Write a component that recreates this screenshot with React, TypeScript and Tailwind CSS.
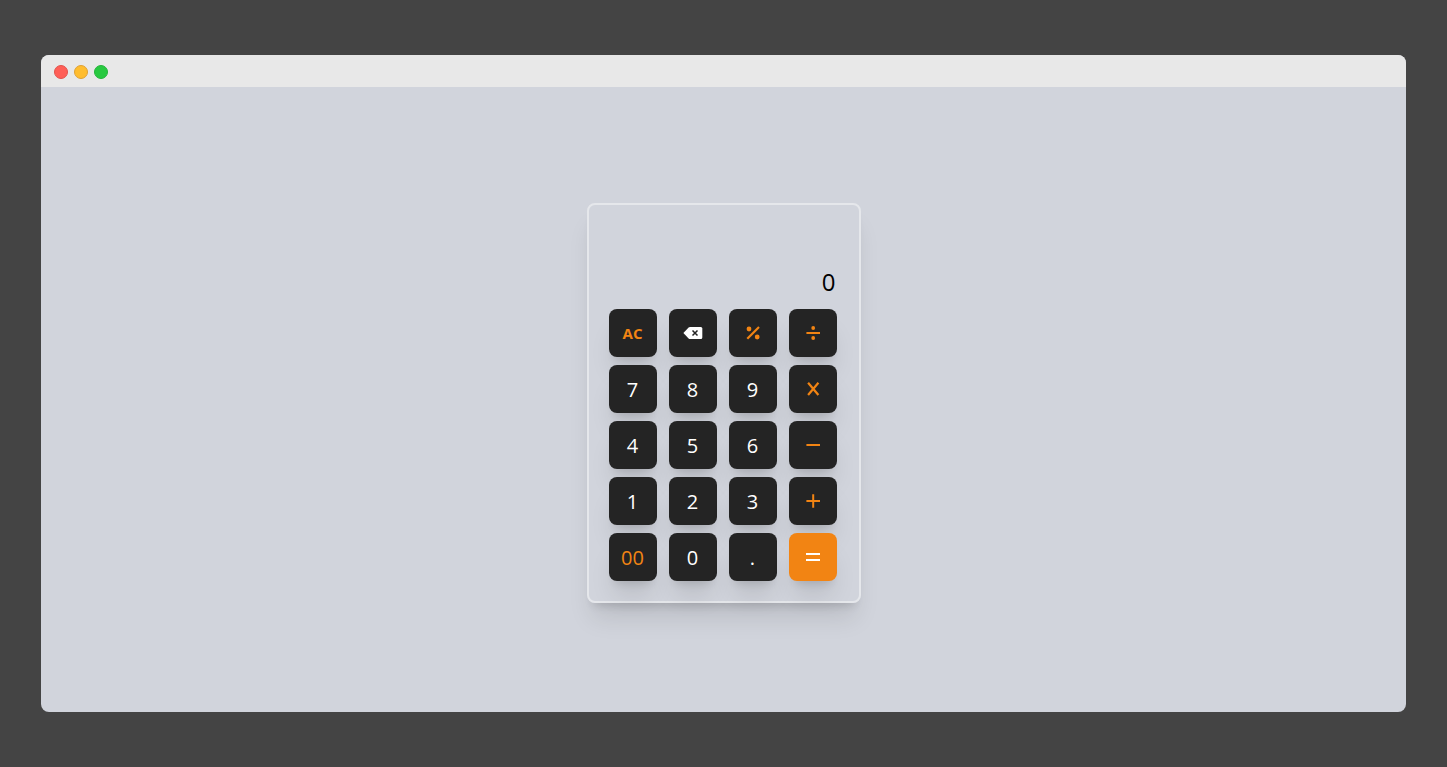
import { useState } from "react";
import type { ReactNode } from "react";

type Key = { value: string; label: string; face?: ReactNode; tone?: string };

const ORANGE = "bg-[#242424] text-[#f28413]";
const WHITE = "bg-[#242424] text-white";

function Glyph({ children }: { children: ReactNode }) {
  return (
    <svg viewBox="0 0 20 20" className="size-5" fill="none" stroke="currentColor" strokeWidth="2" aria-hidden="true">
      {children}
    </svg>
  );
}

const KEYS: Key[] = [
  { value: "AC", label: "All clear", tone: ORANGE, face: <span className="pt-0.5 text-[15px] font-bold">AC</span> },
  {
    value: "DEL",
    label: "Delete",
    face: (
      <Glyph>
        <path d="M.4 10 5.6 4.6Q6.2 4 7 4H17.8Q19.3 4 19.3 5.5V14.5Q19.3 16 17.8 16H7Q6.2 16 5.6 15.4L.4 10Z" fill="currentColor" stroke="none" />
        <path d="m9.5 7.5 5 5m0-5-5 5" stroke="#242424" strokeWidth="1.5" />
      </Glyph>
    ),
  },
  {
    value: "%",
    label: "Percent",
    tone: ORANGE,
    face: (
      <Glyph>
        <path d="M16 4 4.3 15.8" strokeWidth="2.2" />
        <circle cx="6" cy="6" r="2.4" fill="currentColor" stroke="none" />
        <circle cx="14.2" cy="14" r="2.4" fill="currentColor" stroke="none" />
      </Glyph>
    ),
  },
  {
    value: "/",
    label: "Divide",
    tone: ORANGE,
    face: (
      <Glyph>
        <path d="M3.4 10H17" />
        <circle cx="10.2" cy="5" r="1.9" fill="currentColor" stroke="none" />
        <circle cx="10.2" cy="15" r="1.9" fill="currentColor" stroke="none" />
      </Glyph>
    ),
  },
  { value: "7", label: "7" },
  { value: "8", label: "8" },
  { value: "9", label: "9" },
  { value: "*", label: "Multiply", tone: ORANGE, face: <Glyph><path d="M5.1 3.7 15.4 16M15.4 3.7 5.1 16" strokeWidth="2.2" /></Glyph> },
  { value: "4", label: "4" },
  { value: "5", label: "5" },
  { value: "6", label: "6" },
  { value: "-", label: "Subtract", tone: ORANGE, face: <Glyph><path d="M3.4 10H17" /></Glyph> },
  { value: "1", label: "1" },
  { value: "2", label: "2" },
  { value: "3", label: "3" },
  { value: "+", label: "Add", tone: ORANGE, face: <Glyph><path d="M3.4 10H17M10.2 3.2V16.8" /></Glyph> },
  { value: "00", label: "00", tone: ORANGE },
  { value: "0", label: "0" },
  { value: ".", label: "." },
  { value: "=", label: "Equals", tone: "bg-[#f28413] text-white", face: <Glyph><path d="M3 7H17M3 13H17" /></Glyph> },
];

function evaluate(expression: string): string {
  const tokens = expression.match(/\d*\.?\d+|[-+*/%]/g) ?? [];
  const terms: number[] = [];
  let operator = "+";
  for (const token of tokens) {
    if (/^[-+*/%]$/.test(token)) {
      operator = token;
      continue;
    }
    const n = Number(token);
    if (operator === "+") terms.push(n);
    else if (operator === "-") terms.push(-n);
    else {
      const last = terms.pop() ?? 0;
      terms.push(operator === "*" ? last * n : operator === "/" ? last / n : last % n);
    }
  }
  return String(terms.reduce((sum, n) => sum + n, 0));
}

export default function App() {
  const [entry, setEntry] = useState("0");
  const [history, setHistory] = useState("");

  function press(value: string) {
    if (value === "AC") {
      setEntry("0");
      setHistory("");
    } else if (value === "DEL") {
      setEntry(entry.slice(0, -1) || "0");
    } else if (value === "=") {
      setHistory(entry);
      setEntry(evaluate(entry));
    } else {
      setEntry(entry === "0" && /^\d+$/.test(value) ? String(Number(value)) : entry + value);
    }
  }

  return (
    <div className="flex min-h-screen bg-[#444444] px-[41px] py-[55px] font-['Open_Sans','Noto_Sans',sans-serif]">
      <div className="flex flex-1 flex-col overflow-hidden rounded-lg bg-[#d1d4dc]">
        <header className="flex h-8 items-center gap-1.5 bg-[#e8e8e8] px-[13px] pt-0.5">
          <span className="size-3.5 rounded-full border border-[#e2534c] bg-[#ff5f57]" />
          <span className="size-3.5 rounded-full border border-[#dfa133] bg-[#ffbd2e]" />
          <span className="size-3.5 rounded-full border border-[#24b43a] bg-[#28c940]" />
        </header>
        <main className="flex flex-1 items-center justify-center pt-1.5">
          <section aria-label="Calculator" className="rounded-lg border-2 border-[#e5e7eb] pt-5 pr-[22px] pb-5 pl-5 shadow-[0_20px_25px_-5px_rgba(0,0,0,0.1),0_8px_10px_-6px_rgba(0,0,0,0.14)]">
            <div className="flex h-[84px] flex-col justify-end pr-px pb-[9px] text-right text-black">
              <p className="h-8 text-base">{history}</p>
              <output className="text-2xl leading-9">{entry}</output>
            </div>
            <div className="grid grid-cols-[repeat(4,48px)] gap-x-3 gap-y-2">
              {KEYS.map((key) => (
                <button
                  key={key.value}
                  type="button"
                  aria-label={key.label}
                  onClick={() => press(key.value)}
                  className={`flex size-12 items-center justify-center rounded-lg text-xl shadow-[0_20px_25px_-5px_rgba(0,0,0,0.1),0_8px_10px_-6px_rgba(0,0,0,0.14)] ${key.tone ?? WHITE}`}
                >
                  {key.face ?? <span className="pt-0.5">{key.value}</span>}
                </button>
              ))}
            </div>
          </section>
        </main>
      </div>
    </div>
  );
}
